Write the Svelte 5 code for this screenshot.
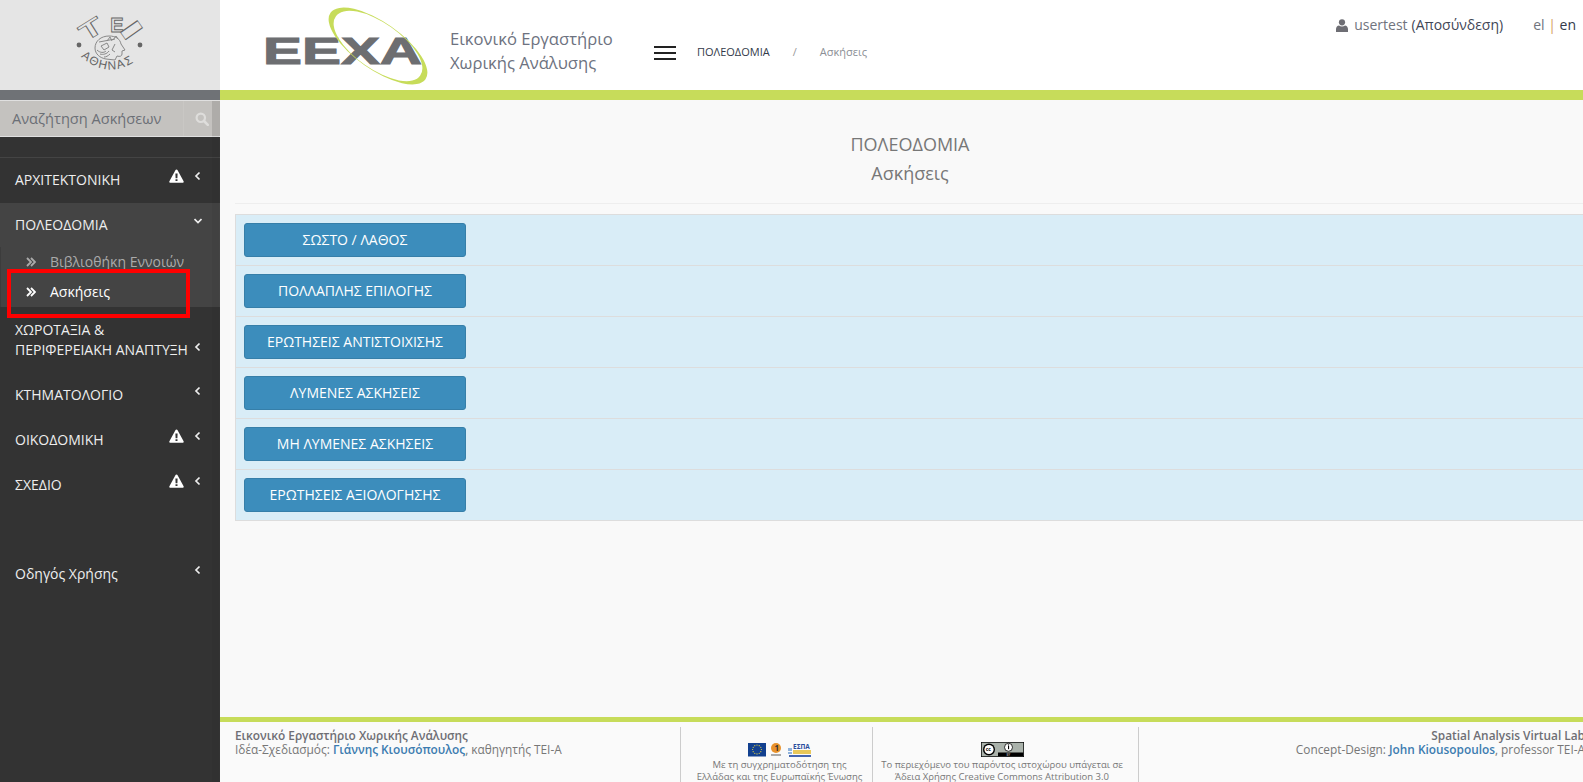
<script>
    const menu = [
        { label: "ΑΡΧΙΤΕΚΤΟΝΙΚΗ", warn: true },
        {
            label: "ΠΟΛΕΟΔΟΜΙΑ",
            open: true,
            children: [
                { label: "Βιβλιοθήκη Εννοιών" },
                { label: "Ασκήσεις", active: true }
            ]
        },
        { label: "ΧΩΡΟΤΑΞΙΑ & ΠΕΡΙΦΕΡΕΙΑΚΗ ΑΝΑΠΤΥΞΗ", wide: true },
        { label: "ΚΤΗΜΑΤΟΛΟΓΙΟ" },
        { label: "ΟΙΚΟΔΟΜΙΚΗ", warn: true },
        { label: "ΣΧΕΔΙΟ", warn: true },
        { spacer: true },
        { label: "Οδηγός Χρήσης" }
    ];

    const exercises = [
        "ΣΩΣΤΟ / ΛΑΘΟΣ",
        "ΠΟΛΛΑΠΛΗΣ ΕΠΙΛΟΓΗΣ",
        "ΕΡΩΤΗΣΕΙΣ ΑΝΤΙΣΤΟΙΧΙΣΗΣ",
        "ΛΥΜΕΝΕΣ ΑΣΚΗΣΕΙΣ",
        "ΜΗ ΛΥΜΕΝΕΣ ΑΣΚΗΣΕΙΣ",
        "ΕΡΩΤΗΣΕΙΣ ΑΞΙΟΛΟΓΗΣΗΣ"
    ];

    // twelve stars round the EU flag
    const stars = Array.from({ length: 12 }, (_, i) => ({
        x: 757 + 4.4 * Math.cos((i * Math.PI) / 6),
        y: 749.5 + 4.4 * Math.sin((i * Math.PI) / 6)
    }));
</script>

<div class="page">
    <aside class="sidebar">
        <div class="brand">
            <svg width="110" height="80" viewBox="50 5 110 80">
                <g class="tei-letters">
                    <text transform="translate(90.500 36) rotate(-32) scale(1.600 1)" font-size="24" text-anchor="middle">Τ</text>
                    <text transform="translate(112 32)" font-size="20" text-anchor="middle">Ε</text>
                    <text transform="translate(118 36) rotate(55) scale(2 1)" font-size="30" text-anchor="middle">Ι</text>
                </g>
                <circle cx="74" cy="45" r="2.400" fill="#666" />
                <circle cx="135" cy="45" r="2.400" fill="#666" />
                <g fill="none" stroke="#888" stroke-width="1">
                    <path d="M90 48c0-7 6-12 14-12 7 0 11 3 12 8l4 6-3 1v3c0 2-2 3-5 2l-2 4-9-1c-6-1-11-5-11-11z" />
                    <path d="M94 42l16-3M96 46l6-3 2 4-5 3zM102 41l3-4 2 4M108 40l3-4 2 3M110 44l-3 6 3 2" />
                    <path d="M92 50c3 3 7 3 9 1M95 54c3 1 7 0 9-3M99 57c2 0 4-1 6-3" />
                </g>
                <path id="tei-arc" d="M75 56Q104 82 135 58" fill="none" />
                <text class="tei-city" font-size="12">
                    <textPath href="#tei-arc" startOffset="1">ΑΘΗΝΑΣ</textPath>
                </text>
            </svg>
        </div>
        <div class="side-strip"></div>
        <div class="search">
            <span class="search-text">Αναζήτηση Ασκήσεων</span>
            <span class="search-btn">
                <svg width="14" height="14" viewBox="0 0 14 14">
                    <circle cx="5.800" cy="5.800" r="4.200" fill="none" stroke="#dedddb" stroke-width="2.200" />
                    <path d="M9 9l3.800 3.800" stroke="#dedddb" stroke-width="2.600" stroke-linecap="round" />
                </svg>
            </span>
            <span class="search-end"></span>
        </div>

        <nav class="menu">
            {#each menu as item}
                {#if item.spacer}
                    <div class="spacer"></div>
                {:else}
                    <div class="group" class:open={item.open}>
                        <div class="item" class:wide={item.wide}>
                            <span class="label">{item.label}</span>
                            {#if item.warn}
                                <svg class="warn" width="15" height="14" viewBox="0 0 15 14">
                                    <path fill-rule="evenodd" fill="#fff" d="M7.500.5c.5 0 .9.3 1.100.7l6 11c.4.7-.1 1.600-1 1.600H1.400c-.9 0-1.400-.9-1-1.600l6-11c.2-.4.6-.7 1.100-.7zM6.400 4.500l.2 4.800h1.800l.2-4.800zM6.500 10.300v1.800h2v-1.800z" />
                                </svg>
                            {/if}
                            <svg class="chev" width="8" height="10" viewBox="0 0 8 10">
                                {#if item.open}
                                    <path d="M.5 3l3.500 3.500L7.500 3" fill="none" stroke="#eee" stroke-width="1.700" />
                                {:else}
                                    <path d="M5.500 1.500L2 5l3.500 3.500" fill="none" stroke="#eee" stroke-width="1.700" />
                                {/if}
                            </svg>
                        </div>
                        {#if item.children}
                            <div class="sub">
                                {#each item.children as child}
                                    <div class="sub-item" class:active={child.active}>
                                        <svg width="10" height="10" viewBox="0 0 10 10">
                                            <path d="M1 1l4 4-4 4M5 1l4 4-4 4" fill="none" stroke="currentColor" stroke-width="1.800" />
                                        </svg>
                                        <span>{child.label}</span>
                                    </div>
                                {/each}
                            </div>
                        {/if}
                    </div>
                {/if}
            {/each}
        </nav>
        <div class="scroll-band"></div>
        <div class="highlight"></div>
    </aside>

    <div class="main">
        <header class="topbar">
            <svg class="logo" width="180" height="80" viewBox="255 5 180 80">
                <text class="logo-text" x="263" y="64" font-size="37" textLength="159" lengthAdjust="spacingAndGlyphs">ΕΕΧΑ</text>
                <path fill-rule="evenodd" fill="#c7dc5a" d="M330.500 12.700A58 23.500 35 1 1 425.500 79.300A58 23.500 35 1 1 330.500 12.700ZM335.800 16.500A51.500 22.500 35 1 0 420.200 75.500A51.500 22.500 35 1 0 335.800 16.500Z" />
            </svg>
            <div class="title">Εικονικό Εργαστήριο<br />Χωρικής Ανάλυσης</div>
            <div class="burger"><span></span><span></span><span></span></div>
            <div class="crumbs">
                <span class="crumb-main">ΠΟΛΕΟΔΟΜΙΑ</span>
                <span class="crumb-sep">/</span>
                <span class="crumb-sub">Ασκήσεις</span>
            </div>
            <div class="user">
                <svg width="12" height="13" viewBox="0 0 12 13">
                    <circle cx="6" cy="3.300" r="3.100" fill="#6e6e74" />
                    <path d="M0 13v-3c0-2 1.500-3.300 3-3.500 1.700 1.200 4.300 1.200 6 0 1.500.2 3 1.500 3 3.500v3z" fill="#6e6e74" />
                </svg>
                <span class="user-name">usertest</span>
                <span class="logout">(Αποσύνδεση)</span>
            </div>
            <div class="lang"><span>el</span> <i>|</i> <b>en</b></div>
        </header>
        <div class="lime"></div>

        <section class="content">
            <div class="heading">
                <div>ΠΟΛΕΟΔΟΜΙΑ</div>
                <div>Ασκήσεις</div>
            </div>
            <div class="list">
                {#each exercises as name}
                    <div class="row"><button class="btn">{name}</button></div>
                {/each}
            </div>
        </section>

        <footer class="footer">
            <div class="cols">
                <div class="col col-left">
                    <strong>Εικονικό Εργαστήριο Χωρικής Ανάλυσης</strong>
                    <div>Ιδέα-Σχεδιασμός: <a href="#top">Γιάννης Κιουσόπουλος</a>, καθηγητής ΤΕΙ-Α</div>
                </div>
                <div class="col col-mid col-espa">
                    <svg width="70" height="19" viewBox="745 740 70 19">
                        <rect x="748" y="743" width="18" height="13.500" fill="#12408f" />
                        {#each stars as s}
                            <circle cx={s.x} cy={s.y} r=".6" fill="#e8d33f" />
                        {/each}
                        <circle cx="776" cy="748" r="5" fill="#e8922b" />
                        <text x="774.500" y="751" font-size="8" font-weight="700" fill="#333">1</text>
                        <rect x="771" y="754" width="10" height="2" fill="#aaa" />
                        <text x="793" y="749" font-size="6.500" font-weight="700" fill="#2a4d9c">ΕΣΠΑ</text>
                        <path d="M788 748h4v3h-4zM788 752h4v2h-4z" fill="#8fb3dc" />
                        <rect x="793" y="750" width="18" height="4" fill="#e9c85a" />
                        <rect x="789" y="755" width="22" height="2" fill="#4565b0" />
                    </svg>
                    <p>Με τη συγχρηματοδότηση της<br />Ελλάδας και της Ευρωπαϊκής Ένωσης</p>
                </div>
                <div class="col col-mid col-cc">
                    <svg width="43" height="15" viewBox="0 0 43 15">
                        <rect width="43" height="15" fill="#000" />
                        <rect x=".7" y=".7" width="41.600" height="13.600" fill="#aab2ab" />
                        <rect x="17" y="10.500" width="25.300" height="3.800" fill="#000" />
                        <circle cx="8" cy="7.500" r="6" fill="#000" />
                        <circle cx="8" cy="7.500" r="4.600" fill="#fff" />
                        <text x="4.700" y="9.300" font-size="5" font-weight="700" fill="#000">cc</text>
                        <circle cx="27.500" cy="5.300" r="4" fill="#fff" stroke="#000" stroke-width=".8" />
                        <rect x="27" y="3.800" width="1.100" height="3.400" fill="#000" />
                        <circle cx="27.500" cy="2.900" r=".6" fill="#000" />
                        <text x="25.500" y="13.700" font-size="3" fill="#ddd">BY</text>
                    </svg>
                    <p>Το περιεχόμενο του παρόντος ιστοχώρου υπάγεται σε<br />Άδεια Χρήσης Creative Commons Attribution 3.0</p>
                </div>
                <div class="col col-right">
                    <strong>Spatial Analysis Virtual Lab</strong>
                    <div>Concept-Design: <a href="#top">John Kiousopoulos</a>, professor TEI-A</div>
                </div>
            </div>
        </footer>
    </div>
</div>

<style>
    :global(html), :global(body) {
        margin: 0;
        height: 100%;
        overflow: hidden;
    }

    :global(body) {
        font-family: "Open Sans", "Noto Sans", sans-serif;
        background: #f9f9f9;
    }

    .page {
        display: flex;
        width: 1600px;
        height: 782px;
    }

    /* sidebar */
    .sidebar {
        position: relative;
        width: 220px;
        flex: none;
        background: #333;
        display: flex;
        flex-direction: column;
    }

    .brand {
        height: 90px;
        background: #e5e5e5;
        display: flex;
        justify-content: center;
        align-items: center;
    }

    .tei-letters text {
        fill: #e5e5e5;
        stroke: #666;
        stroke-width: 0.9;
        vector-effect: non-scaling-stroke;
        font-family: "Liberation Sans", sans-serif;
        font-weight: 700;
    }

    .tei-city {
        fill: #666;
        font-family: "Liberation Sans", sans-serif;
        letter-spacing: 1.5px;
    }

    .side-strip {
        height: 10px;
        background: #6f7276;
    }

    .search {
        height: 35px;
        display: flex;
        background: #c4c2bf;
        border-top: 1px solid #e0e0e0;
        border-bottom: 1px solid #e0e0e0;
        margin-bottom: 20px;
    }

    .search-text {
        flex: 1;
        padding-left: 12px;
        font-size: 14.600px;
        line-height: 35px;
        color: #6b6f76;
    }

    .search-btn {
        width: 29px;
        box-sizing: border-box;
        border-left: 1px solid #c9c7c4;
        padding-right: 3px;
        display: flex;
        align-items: center;
        justify-content: flex-end;
    }

    .search-end {
        width: 8px;
        background: #aeaca9;
    }

    .menu {
        border-top: 1px solid #444;
        color: #eee;
        font-size: 14px;
        line-height: 20px;
    }

    .group.open {
        background: #444;
        height: 104px;
    }

    .item {
        position: relative;
        height: 45px;
        box-sizing: border-box;
        padding: 12px 30px 13px 15px;
    }

    .item.wide {
        height: 66px;
        padding: 13px 20px 13px 15px;
    }

    .item .chev {
        position: absolute;
        right: 18px;
        top: 13px;
    }

    .item.wide .chev {
        top: 35px;
    }

    .item .warn {
        position: absolute;
        left: 169px;
        top: 11px;
    }

    .sub {
        margin-top: -1px;
        border-left: 1px solid #3c3c3c;
    }

    .sub-item {
        height: 30px;
        display: flex;
        align-items: center;
        gap: 14px;
        padding-left: 25px;
        color: #aaa;
    }

    .sub-item.active {
        color: #fff;
    }

    .spacer {
        height: 44px;
    }

    .scroll-band {
        position: absolute;
        top: 136px;
        right: 1px;
        bottom: 0;
        width: 7px;
        background: rgba(0, 0, 0, 0.04);
    }

    .highlight {
        position: absolute;
        left: 7px;
        top: 269px;
        width: 183px;
        height: 49px;
        box-sizing: border-box;
        border: 4px solid #f00;
    }

    /* main column */
    .main {
        flex: 1;
        display: flex;
        flex-direction: column;
        min-width: 0;
    }

    .topbar {
        height: 90px;
        background: #fff;
        display: flex;
        align-items: flex-start;
        padding-left: 35px;
        padding-right: 24px;
        box-sizing: border-box;
    }

    .logo {
        margin-top: 5px;
    }

    .logo-text {
        fill: #6d6e71;
        stroke: #6d6e71;
        stroke-width: 1;
        font-family: "Liberation Sans", sans-serif;
        font-weight: 700;
    }

    .title {
        margin: 27px 0 0 15px;
        width: 204px;
        font-size: 16.600px;
        line-height: 24px;
        color: #6d7280;
    }

    .burger {
        width: 22px;
        margin-top: 46px;
        display: flex;
        flex-direction: column;
        gap: 4px;
    }

    .burger span {
        height: 2px;
        background: #222;
    }

    .crumbs {
        margin: 44px 0 0 21px;
        display: flex;
        font-size: 11px;
        line-height: 16px;
    }

    .crumb-main {
        color: #333a4a;
    }

    .crumb-sep {
        color: #999;
        margin: 0 23px;
    }

    .crumb-sub {
        color: #8c8f96;
    }

    .user {
        margin: 15px 0 0 auto;
        display: flex;
        align-items: center;
        gap: 6px;
        font-size: 14px;
        line-height: 20px;
    }

    .user-name {
        color: #70747e;
    }

    .logout {
        margin-left: -2px;
        color: #3f4656;
    }

    .lang {
        margin: 15px 0 0 30px;
        font-size: 14px;
        line-height: 20px;
        color: #70747e;
    }

    .lang i {
        font-style: normal;
        color: #d6a060;
    }

    .lang b {
        font-weight: 400;
        color: #333a4a;
    }

    .lime {
        height: 10px;
        background: #c7dc5a;
    }

    .content {
        flex: 1;
        padding: 0 15px;
        background: #f9f9f9;
    }

    .heading {
        padding: 30px 0 15px;
        border-bottom: 1px solid #eee;
        margin-bottom: 10px;
        text-align: center;
        font-size: 18px;
        line-height: 29px;
        color: #777;
    }

    .list {
        background: #d9edf7;
        border: 1px solid #ddd;
        border-top: 0;
    }

    .row {
        border-top: 1px solid #ddd;
        padding: 8px;
    }

    .btn {
        display: block;
        width: 222px;
        height: 34px;
        padding: 0 0 2px;
        background: #3c8dbc;
        border: 1px solid #367fa9;
        border-radius: 3px;
        color: #fff;
        font-family: inherit;
        font-size: 14px;
    }

    /* footer */
    .footer {
        height: 65px;
        overflow: hidden;
        flex: none;
        background: #fafafa;
        border-top: 5px solid #c7dc5a;
        box-sizing: border-box;
        padding: 5px 15px 0;
        color: #777;
    }

    .cols {
        display: flex;
        height: 60px;
        font-size: 11.850px;
        line-height: 14px;
    }

    .col strong {
        font-weight: 600;
        color: #6e6e74;
    }

    .col a {
        color: #3c7cb0;
        font-weight: 600;
        text-decoration: none;
    }

    .col-left {
        width: 445px;
        padding-top: 1px;
    }

    .col-right {
        flex: 1;
        text-align: right;
        padding-top: 1px;
    }

    .col-mid {
        border-left: 1px solid #ccc;
        text-align: center;
        box-sizing: border-box;
        padding-top: 13px;
    }

    .col-mid svg {
        display: block;
        margin: 0 auto;
    }

    .col-mid p {
        margin: 0;
        font-size: 9.500px;
        line-height: 11.500px;
    }

    .col-espa {
        width: 192px;
        padding-left: 6px;
    }

    .col-cc {
        width: 267px;
        border-right: 1px solid #ccc;
        padding-right: 7px;
    }

    .col-cc svg {
        margin: 2px auto;
    }
</style>
